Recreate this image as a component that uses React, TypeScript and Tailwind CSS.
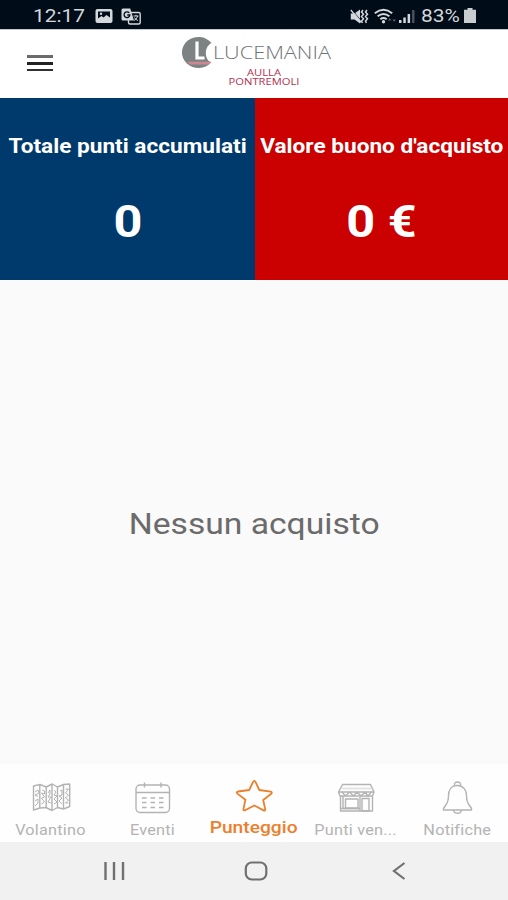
import React from "react";
import clsx from "clsx";

const StatusBar: React.FC = () => (
  <div className="flex h-[29px] shrink-0 items-center justify-between bg-[#000c18] pl-[33px] pr-[32px] pt-[3px] text-[#d3d8dc]">
    <div className="flex items-center">
      <span className="w-[52px] origin-left scale-x-[1.16] whitespace-nowrap text-[18px] leading-none">
        12:17
      </span>
      <svg width="18" height="16" viewBox="0 0 18 16" className="ml-[10px]">
        <rect x="0.5" y="1" width="17" height="14" rx="2" fill="currentColor" />
        <path d="M3 3.5h12v6l-3.5-2.5-3 2.5-2-1.5L3 10.500z" fill="#000c18" />
        <circle cx="6" cy="5.8" r="1.2" fill="currentColor" />
      </svg>
      <svg width="20" height="17" viewBox="0 0 20 17" className="ml-[8px]">
        <rect x="7.5" y="4.5" width="11.7" height="11.5" rx="1.5" fill="none" stroke="currentColor" strokeWidth="1.4" />
        <path d="M1.8.5h7.4L13 12.500H1.800Q.5 12.500.5 11V2Q.5.5 1.800.5z" fill="currentColor" />
        <path d="M8.300 4.900A2.900 2.900 0 1 0 8.900 7H6.300" fill="none" stroke="#000c18" strokeWidth="1.3" />
        <path d="M12.500 8h5M15 6.800V8M16.700 8q-.7 3-3.700 4.500M13.500 9.500q1 2 3.300 3" fill="none" stroke="currentColor" />
      </svg>
    </div>
    <div className="flex items-center">
      {/* muted */}
      <svg width="19" height="17" viewBox="0 0 19 17">
        <path d="M.8 5.5h3.700L10 1.500v14l-5.500-4H.8z" fill="currentColor" />
        <path d="M1.800 1.500l10 12" stroke="#000c18" strokeWidth="0.8" />
        <path d="M.8 2l10.500 12.500" stroke="currentColor" strokeWidth="1.3" />
        <path d="M13 2l-1.500 2 2 2.200-2 2.300 2 2.200-2 2.300 1 1.800M17 2l-1.500 2 2 2.200-2 2.300 2 2.200-2 2.300 1 1.800" fill="none" stroke="currentColor" strokeWidth="1.5" />
      </svg>
      <svg width="23" height="17" viewBox="0 0 23 17" className="ml-[5px]">
        <g fill="none" stroke="currentColor" strokeWidth="1.9">
          <path d="M.8 5.200Q9.500-1.600 18.200 5.200" />
          <path d="M3.600 8.300Q9.500 3.500 15.400 8.300" />
          <path d="M6.300 11.200Q9.500 8.700 12.700 11.200" />
        </g>
        <circle cx="9.500" cy="13.700" r="1.700" fill="currentColor" />
        <path d="M14 12.500l1.700-2.500 1.700 2.500zM18.500 11.500h3.400l-1.700 2.500z" fill="#56616b" />
      </svg>
      <svg width="16" height="16" viewBox="0 0 16 16" className="ml-[2px]">
        <path d="M0 12h2.500v3H0zM4.300 9.500h2.500V15H4.300zM8.600 6h2.500v9H8.600z" fill="currentColor" />
        <path d="M13 2h2.500v13H13z" fill="#46515b" />
      </svg>
      <span className="ml-[6px] w-[41px] origin-left scale-x-[1.13] whitespace-nowrap text-[18.5px] leading-none">
        83%
      </span>
      <svg width="12" height="16" viewBox="0 0 12 16" className="ml-[2px]">
        <path d="M3.500 0h5v1.800H12V15H0V1.800h3.500z" fill="#c9cdd0" />
      </svg>
    </div>
  </div>
);

const Logo: React.FC = () => (
  <svg width="152" height="54" viewBox="0 0 152 54" role="img" aria-label="Lucemania">
    <path
      d="M31.500 8A16.500 15.500 0 1 0 31 27.500C24 24 24 12 31.500 8z"
      fill="#7d8283"
    />
    <path d="M17 6.500v16.500h7.500" fill="none" stroke="#fff" strokeWidth="3.2" />
    <path d="M7.500 26.800h24l-2.500 2.700H10z" fill="#cf8795" />
    <text x="33" y="24.300" textLength="118" lengthAdjust="spacingAndGlyphs" fill="#707375" fontFamily="Open Sans, sans-serif" fontSize="18" fontWeight="300">
      LUCEMANIA
    </text>
    <text x="67" y="41" textLength="34" lengthAdjust="spacingAndGlyphs" fill="#b43353" fontFamily="Open Sans, sans-serif" fontSize="9.2">
      AULLA
    </text>
    <text x="48.500" y="50.400" textLength="71" lengthAdjust="spacingAndGlyphs" fill="#b43353" fontFamily="Open Sans, sans-serif" fontSize="9.2">
      PONTREMOLI
    </text>
  </svg>
);

const Header: React.FC = () => (
  <header className="grid h-[69px] shrink-0 grid-cols-[180px_152px_1fr] border-t border-[#c4c7c9] bg-white">
    <button aria-label="Menu" className="flex flex-col gap-[4px] pl-[27px] pt-[25px]">
      <span className="h-[3px] w-[26px] bg-[#6a6a6a]" />
      <span className="h-[2.5px] w-[26px] bg-[#222]" />
      <span className="h-[2.5px] w-[26px] bg-[#303030]" />
    </button>
    <div className="pt-[5px]">
      <Logo />
    </div>
  </header>
);

const totals = [
  { label: "Totale punti accumulati", value: "0", color: "bg-[#003a6c]" },
  { label: "Valore buono d'acquisto", value: "0 €", color: "bg-[#cb0000]" },
];

const tabs = [
  {
    label: "Volantino",
    icon: (
      <>
        <path d="M2.500 6L9 4.500l6.200 2.500 6-3 5.300 3 6-2.500 6.200-.5v22.500l-6.200 2.500-6-1.500-5.500 3-6-3L9 28l-6.500 2z" />
        <path d="M8.800 5v23M15.200 7v20.500M21 4v26M26.500 7v20.500M32.500 5v23" />
        <path d="M4 12l3-2 1 3-4 2 3 1.500M4 21l3-2v4l-3 3M11 10l2.500 1v3l-3-1 3 4-3 1 3 4-3 2M17 13l2-3v4l-2 3h3l-3 5 3 1M23 10l2 2-2 3 3 1-3 3 3 3-3 2M29 11l2-1v5l-3 1 3 2-3 3 3 3M34.500 9h3l-3 4 3 2-3 3 3 2-3 3h3" strokeWidth="1" />
      </>
    ),
  },
  {
    label: "Eventi",
    icon: (
      <>
        <rect x="4" y="5" width="33.500" height="27.500" rx="4" />
        <path d="M4 12.500h33.500M12.500 2.500v5M29 2.500v5" />
        <path d="M10 18H14.500M18.500 18H23M27 18H31.500M10 22.500H14.500M18.500 22.500H23M27 22.500H31.500M10 27.500H14.500M18.500 27.500H23M27 27.500H31.500" strokeWidth="1.7" />
      </>
    ),
  },
  {
    label: "Punteggio",
    active: true,
    icon: (
      <path d="M20.300 1.800q.8 0 1.200 1l3.800 8.200 11.300 1.700q2 .5.600 2.100L29.200 21l2 9.300q.2 1.900-1.600 1.100L20.300 26.500l-9.200 4.700q-1.900.8-1.700-1.100l2-9.300-8-6.200q-1.500-1.500.600-2.100L15.200 11l3.900-8.200q.4-1 1.200-1z" />
    ),
  },
  {
    label: "Punti ven...",
    icon: (
      <>
        <path d="M6.500 4.500h28l3.500 7.500-1.500 4H4l-1.500-4zM4.500 16V31H36.500v-15M2.500 12h35.500M7 16.500v12h17" />
        <path d="M6 12l3.500 4 4-4 4 4 3.500-4 4 4 4-4 3 4 3.500-4" />
        <path d="M9.500 19h12.500v9H9.500zM26 18.500h7V31h-7zM4.500 28.500h19.500M24 17v14" />
        <path d="M6 8.500h29" strokeWidth="2" opacity=".35" />
      </>
    ),
  },
  {
    label: "Notifiche",
    icon: (
      <>
        <path d="M20.300 5.500C14 5.500 11.500 10.500 11.500 15.500 11.500 20 10.500 23 8.500 25.500L6.500 28.500v1.500h28v-1.500l-2-3C30.500 23 29.500 20 29.500 15.500 29.500 10.500 26.500 5.500 20.300 5.500z" />
        <path d="M17.500 5.500q-.5-3.500 3-3.500t3 3.500M16.500 30q.5 3.300 4 3.300t4-3.300" />
      </>
    ),
  },
];

const BottomNav: React.FC = () => (
  <nav className="grid h-[78px] shrink-0 grid-cols-5 bg-[#fefefe] pt-[15px]">
    {tabs.map((tab) => (
      <div
        key={tab.label}
        className={clsx(
          "flex flex-col items-center",
          tab.active ? "text-[#ec7f2c]" : "pt-[1px] text-[#b3b3b3]"
        )}
      >
        <svg
          width="40"
          height="36"
          viewBox="0 0 40 36"
          fill="none"
          stroke="currentColor"
          strokeWidth={tab.active ? 1.8 : 1.4}
          strokeLinejoin="round"
        >
          {tab.icon}
        </svg>
        <span
          className={clsx(
            "whitespace-nowrap",
            tab.active
              ? "mt-[3px] scale-x-[1.2] text-[16px] leading-[20px] font-medium"
              : "mt-[4px] scale-x-[1.16] text-[14px] leading-[20px] tracking-[0.2px]"
          )}
        >
          {tab.label}
        </span>
      </div>
    ))}
  </nav>
);

const SystemNav: React.FC = () => (
  <div className="flex h-[58px] shrink-0 items-center bg-[#f1f1f1] pl-[103px] text-[#707070]">
    <svg width="22" height="20" viewBox="0 0 22 20" fill="none" stroke="currentColor" strokeWidth="2.4">
      <path d="M2.500 1v18M11 1v18M20 1v18" />
    </svg>
    <svg width="24" height="20" viewBox="0 0 24 20" fill="none" stroke="currentColor" strokeWidth="2.2" className="ml-[119px]">
      <rect x="1.800" y="1.500" width="20.500" height="17" rx="6" />
    </svg>
    <svg width="14" height="20" viewBox="0 0 14 20" fill="none" stroke="currentColor" strokeWidth="2.2" className="ml-[124px]">
      <path d="M12.500 2L2 10l10.500 8" />
    </svg>
  </div>
);

const App: React.FC = () => {
  return (
    <div className="flex h-[900px] w-[508px] flex-col overflow-hidden bg-[#fafafa] font-['Roboto',sans-serif]">
      <StatusBar />
      <Header />

      <section className="grid h-[182px] shrink-0 grid-cols-[255px_253px] text-white">
        {totals.map((total) => (
          <div
            key={total.label}
            className={clsx("flex flex-col items-center pt-[37px] font-bold", total.color)}
          >
            <h2 className="scale-x-[1.16] whitespace-nowrap text-[19.5px] leading-[24px]">
              {total.label}
            </h2>
            <p className="mt-[36px] scale-x-[1.12] text-[45px] leading-[54px]">
              {total.value}
            </p>
          </div>
        ))}
      </section>

      <main className="flex flex-1 items-center justify-center pt-[4px]">
        <p className="scale-x-[1.16] whitespace-nowrap text-[29px] leading-[34px] text-[#6b6b6b]">
          Nessun acquisto
        </p>
      </main>

      <BottomNav />
      <SystemNav />
    </div>
  );
};

export default App;
